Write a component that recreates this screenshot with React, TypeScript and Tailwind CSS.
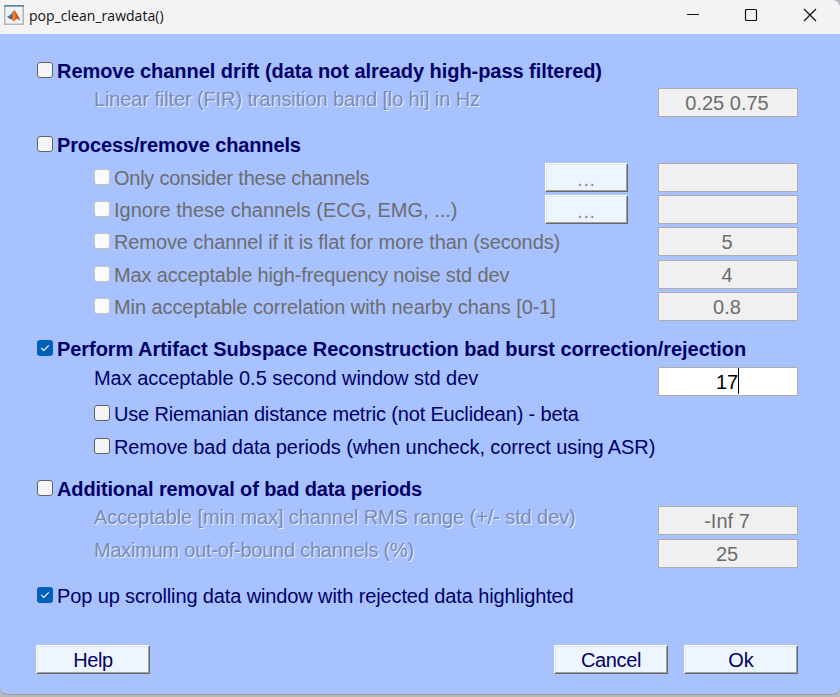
import type { ReactNode } from "react";

type Tone = "strong" | "normal" | "muted" | "etched";
type Box = "off" | "on" | "disabled";

const tones: Record<Tone, string> = {
  strong: "font-bold text-[#000066]",
  normal: "text-[#000066]",
  muted: "text-[#6d6d6d]",
  etched: "text-[#7c8cb4] [text-shadow:1px_1px_0_#e6efff]",
};

function CheckBox({ state }: { state: Box }) {
  if (state === "on") {
    return (
      <span className="mt-1.5 flex size-4 shrink-0 items-center justify-center rounded-[3px] bg-[#005fb8]">
        <svg viewBox="0 0 16 16" className="size-4" fill="none" stroke="#fff" strokeWidth="1.1">
          <path d="M4.2 7.8 6.8 10.4 11.8 5.4" />
        </svg>
      </span>
    );
  }
  return (
    <span
      className={`mt-1.5 size-4 shrink-0 rounded-[3px] border ${
        state === "disabled" ? "border-[#c5c5c5] bg-[#fbfbfb]" : "border-[#626262] bg-[#f4f4f4]"
      }`}
    />
  );
}

function Row({
  label,
  tone,
  box,
  indent = false,
  track = "",
  gap,
  raised = false,
  children,
}: {
  label: string;
  tone: Tone;
  box?: Box;
  indent?: boolean;
  track?: string;
  gap: string;
  raised?: boolean;
  children?: ReactNode;
}) {
  return (
    <div className={`flex h-[29px] items-start ${gap} ${indent ? "pl-[57px]" : ""}`}>
      {box && <CheckBox state={box} />}
      <span
        className={`whitespace-pre ${box ? "ml-1" : ""} ${raised ? "leading-[22px]" : "leading-[31px]"} ${tones[tone]} ${track}`}
      >
        {label}
      </span>
      <div className="ml-auto flex">{children}</div>
    </div>
  );
}

function Field({ value = "", active = false }: { value?: string; active?: boolean }) {
  return (
    <div
      className={`flex h-[29px] w-[140px] items-start justify-center border border-[#adadad] pr-0.5 ${
        active ? "bg-white text-black" : "bg-[#f0f0f0] text-[#6d6d6d]"
      }`}
    >
      <span className="leading-[29px]">{value}</span>
      {active && <span className="-mr-px h-[26px] w-px bg-black" />}
    </div>
  );
}

function Button({ label, small = false, track = "" }: { label: string; small?: boolean; track?: string }) {
  return (
    <div
      className={`h-[29px] border border-t-white border-r-[#696969] border-b-[#696969] border-l-white ${
        small ? "mr-[30px] w-[83px] text-[#8c8c8c]" : "w-[114px] text-[#000066]"
      }`}
    >
      <div className="flex h-full items-center justify-center border border-t-[#e3e3e3] border-r-[#a0a0a0] border-b-[#a0a0a0] border-l-[#e3e3e3] bg-[#edf5ff]">
        <span className={`leading-6 ${small ? "pt-0.5" : ""} ${track}`}>{label}</span>
      </div>
    </div>
  );
}

function MatlabIcon() {
  return (
    <svg viewBox="0 0 20 20" className="size-5">
      <defs>
        <linearGradient id="peak" x1="0" y1="0" x2="1" y2="0">
          <stop offset="0" stopColor="#7a1f1a" />
          <stop offset="0.45" stopColor="#e8641b" />
          <stop offset="1" stopColor="#b5260f" />
        </linearGradient>
      </defs>
      <rect x="0.75" y="0.75" width="18.5" height="18.5" fill="#f1f3f5" stroke="#aeb5bc" strokeWidth="1.5" />
      <path d="M0 0h20v1.6H0z" fill="#5887b0" />
      <path d="M3 11.5 6.3 10 9 6 8 12 5.8 14z" fill="#3576b0" />
      <path d="M5.8 14 8 11 10 4.7 12 7 16.5 15.5 13 13.5 9.5 16.5 7.5 14z" fill="url(#peak)" />
      <path d="M10.2 6 10.8 12.5 9.5 16.5 8.6 13z" fill="#f3a12c" />
    </svg>
  );
}

function TitleBar() {
  return (
    <header className="flex h-[34px] items-start bg-[#f3f3f3] pl-1">
      <div className="mt-[5px]">
        <MatlabIcon />
      </div>
      <span className="ml-[5px] font-['Open_Sans',sans-serif] text-[14px] leading-8 tracking-[0.03px] text-[#111]">
        pop_clean_rawdata()
      </span>
      <svg className="mt-[7px] mr-5 ml-auto h-4 w-[134px]" fill="none" stroke="#111">
        <path d="M1 7.5h12" />
        <rect x="59.5" y="2.5" width="11" height="11" rx="1" strokeWidth="1.2" />
        <path d="m118 2 12 12m0-12-12 12" strokeWidth="1.2" />
      </svg>
    </header>
  );
}

export default function App() {
  return (
    <div className="h-[697px] w-[840px] overflow-hidden bg-[#b8b8b8] font-['Liberation_Sans',Arial,sans-serif] text-[20px]">
      <div className="flex h-[695px] flex-col overflow-hidden rounded-tr-lg rounded-b-lg border-b border-[#999da8] bg-[#a8c2ff]">
        <TitleBar />
        <main className="pr-[42px] pl-[37px]">
          <Row gap="mt-[22px]" box="off" tone="strong" track="tracking-[-0.05px]" label="Remove channel drift (data not already high-pass filtered)" />
          <Row gap="mt-[3px]" indent raised tone="etched" track="tracking-[-0.11px]" label="Linear filter (FIR) transition band [lo hi] in Hz">
            <Field value="0.25 0.75" />
          </Row>
          <Row gap="mt-[13px]" box="off" tone="strong" track="tracking-[-0.13px]" label="Process/remove channels" />
          <Row gap="mt-1" indent box="disabled" tone="muted" track="tracking-[-0.25px]" label="Only consider these channels">
            <Button small label="..." track="tracking-[0.6px]" />
            <Field />
          </Row>
          <Row gap="mt-[3px]" indent box="disabled" tone="muted" label="Ignore these channels (ECG, EMG, ...)">
            <Button small label="..." track="tracking-[0.6px]" />
            <Field />
          </Row>
          <Row gap="mt-[3px]" indent box="disabled" tone="muted" track="tracking-[-0.1px]" label="Remove channel if it is flat for more than (seconds)">
            <Field value="5" />
          </Row>
          <Row gap="mt-1" indent box="disabled" tone="muted" track="tracking-[-0.14px]" label="Max acceptable high-frequency noise std dev">
            <Field value="4" />
          </Row>
          <Row gap="mt-[3px]" indent box="disabled" tone="muted" track="tracking-[-0.08px]" label="Min acceptable correlation with nearby chans [0-1]">
            <Field value="0.8" />
          </Row>
          <Row gap="mt-[13px]" box="on" tone="strong" track="tracking-[-0.05px]" label="Perform Artifact Subspace Reconstruction bad burst correction/rejection" />
          <Row gap="mt-1" indent raised tone="normal" track="tracking-[-0.04px]" label="Max acceptable 0.5 second window std dev">
            <Field value="17" active />
          </Row>
          <Row gap="mt-[3px]" indent box="off" tone="normal" track="tracking-[-0.17px]" label="Use Riemanian distance metric (not Euclidean) - beta" />
          <Row gap="mt-1" indent box="off" tone="normal" track="tracking-[-0.1px]" label="Remove bad data periods (when uncheck, correct using ASR)" />
          <Row gap="mt-[13px]" box="off" tone="strong" track="tracking-[-0.13px]" label="Additional removal of bad data periods" />
          <Row gap="mt-[3px]" indent raised tone="etched" track="tracking-[-0.09px]" label="Acceptable [min max] channel RMS range (+/- std dev)">
            <Field value="-Inf 7" />
          </Row>
          <Row gap="mt-1" indent raised tone="etched" track="tracking-[-0.24px]" label="Maximum out-of-bound channels (%)">
            <Field value="25" />
          </Row>
          <Row gap="mt-[13px]" box="on" tone="normal" track="tracking-[-0.12px]" label="Pop up scrolling data window with rejected data highlighted" />
          <footer className="mt-[35px] -ml-px flex">
            <Button label="Help" track="tracking-[-0.4px]" />
            <div className="ml-auto flex gap-4">
              <Button label="Cancel" track="tracking-[-0.4px]" />
              <Button label="Ok" />
            </div>
          </footer>
        </main>
      </div>
    </div>
  );
}
